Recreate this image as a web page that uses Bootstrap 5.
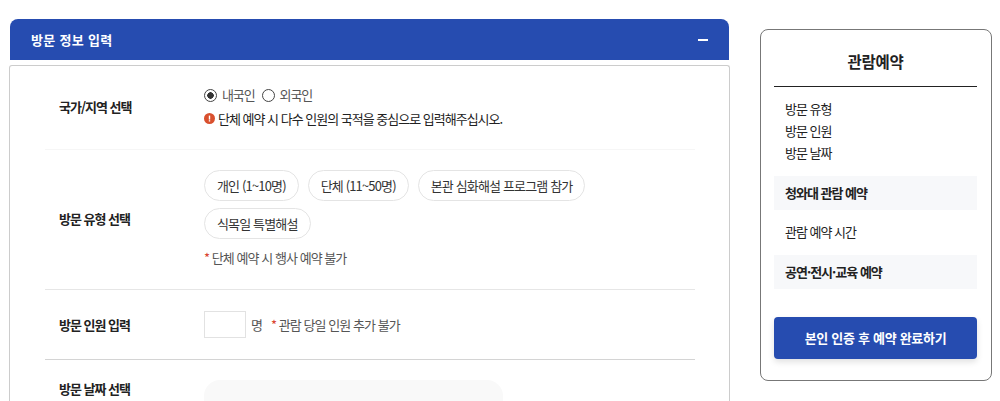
<!DOCTYPE html>
<html lang="ko">
<head>
<meta charset="utf-8">
<title>방문 정보 입력</title>
<link href="https://cdn.jsdelivr.net/npm/bootstrap@5.3.0/dist/css/bootstrap.min.css" rel="stylesheet">
<style>
html,body{height:401px;overflow:hidden;background:#fff}
body{font-family:"Noto Sans CJK KR","Noto Sans",sans-serif;font-size:13px;color:#222;letter-spacing:-1px}
.stage{display:flex;align-items:flex-start;padding:19px 8px 0 10px;height:401px;overflow:hidden}
.main-col{width:719px;flex:none}
.side-col{width:232px;flex:none;margin:10px 0 0 31px;height:352px;border:1px solid #777;border-radius:8px;padding:0 14px 0 13px;background:#fff}
.acc-head{height:41px;background:#264cb0;color:#fff;border-radius:8px 8px 0 0;padding:0 21px;font-weight:700;font-size:13px;letter-spacing:.3px}
.acc-minus{width:10px;height:2px;background:#fff}
.acc-body{margin:5px 0 0 -1px;width:721px;border:1px solid #ccc;border-bottom:0;border-radius:3px 3px 0 0;padding:0 34px 0 35px;height:340px}
.frow{display:flex;align-items:center;border-bottom:1px solid #ddd}
.frow-a{height:84px;border-color:#f6f6f6}
.frow-b{height:140px;border-color:#e6e6e6}
.frow-c{height:70px;border-color:#d4d4d4}
.flabel{width:159px;flex:none;padding-left:14px;font-weight:700;color:#222;letter-spacing:-1px}
.frow-a .flabel,.frow-b .flabel{padding-bottom:2px}
.radio-dot{width:13px;height:13px;border:1px solid #444;border-radius:50%;display:inline-block;flex:none}
.radio-dot.on{background:radial-gradient(circle,#333 0 3px,#fff 3.5px)}
.radio-txt{color:#555;margin:0 7px 0 5px;line-height:18px;letter-spacing:-1.1px;position:relative;top:-1px}
.warn-ico{width:11px;height:11px;flex:none;margin-right:3px}
.pill{border:1px solid #e4e4e4;border-radius:16px;height:31px;padding:0 12px;display:inline-flex;align-items:center;color:#333;background:#fff;white-space:nowrap;letter-spacing:-.85px}
.pill-wrap{gap:7px 9px;width:420px}
.note{color:#555;letter-spacing:-.95px}
.note-gap{margin-top:10px}
.note-t{position:relative;top:-1px}
.unit-txt{margin-left:5px}
.limit-txt{margin-left:9px}
.star{color:#d9432f}
.num-box{width:42px;height:27px;border:1px solid #e2e2e2;flex:none;display:block;border-radius:0;padding:0}
.date-box{width:299px;height:60px;background:#f9f9f9;border-radius:16px 16px 0 0;margin-top:20px}
.frow-d{align-items:flex-start;border:0}
.frow-d .flabel{padding-top:19px}
.side-title{height:57px;border-bottom:1px solid #222;font-size:15.5px;font-weight:700;text-align:center;line-height:62px;color:#222;letter-spacing:-.3px}
.side-list{padding:11px 11px 12px;margin:0;list-style:none}
.side-list li{line-height:22px}
.side-band{height:34px;background:#f7f8fa;padding:0 11px;font-weight:700;display:flex;align-items:center}
.side-plain{height:45px;padding:0 11px 2px;display:flex;align-items:center}
.side-btn{display:flex;align-items:center;justify-content:center;width:100%;height:42px;margin-top:28px;background:#264cb0;color:#fff;border:0;border-radius:4px;font-weight:700;font-size:13px;letter-spacing:-.3px;box-shadow:0 3px 6px rgba(0,0,0,.12)}
.side-btn:hover{background:#264cb0;color:#fff}
</style>
</head>
<body>
<div class="stage">
  <div class="main-col">
    <div class="acc-head d-flex align-items-center justify-content-between">
      <span>방문 정보 입력</span><span class="acc-minus"></span>
    </div>
    <div class="acc-body">
      <div class="frow frow-a">
        <div class="flabel">국가/지역 선택</div>
        <div>
          <div class="d-flex align-items-center">
            <span class="radio-dot on"></span><span class="radio-txt">내국인</span>
            <span class="radio-dot"></span><span class="radio-txt">외국인</span>
          </div>
          <div class="d-flex align-items-center mt-1">
            <svg class="warn-ico" viewBox="0 0 11 11"><circle cx="5.5" cy="5.5" r="5.5" fill="#d9502e"/><rect x="4.8" y="2.6" width="1.4" height="4" fill="#fff"/><rect x="4.8" y="7.2" width="1.4" height="1.3" fill="#fff"/></svg>
            <span>단체 예약 시 다수 인원의 국적을 중심으로 입력해주십시오.</span>
          </div>
        </div>
      </div>
      <div class="frow frow-b">
        <div class="flabel">방문 유형 선택</div>
        <div>
          <div class="d-flex flex-wrap pill-wrap">
            <span class="pill">개인 (1~10명)</span>
            <span class="pill">단체 (11~50명)</span>
            <span class="pill">본관 심화해설 프로그램 참가</span>
            <span class="pill">식목일 특별해설</span>
          </div>
          <div class="note note-gap note-t"><span class="star">*</span> 단체 예약 시 행사 예약 불가</div>
        </div>
      </div>
      <div class="frow frow-c">
        <div class="flabel">방문 인원 입력</div>
        <div class="d-flex align-items-center">
          <input class="num-box" type="text" aria-label="방문 인원">
          <span class="note unit-txt">명</span>
          <span class="note limit-txt"><span class="star">*</span> 관람 당일 인원 추가 불가</span>
        </div>
      </div>
      <div class="frow frow-d">
        <div class="flabel">방문 날짜 선택</div>
        <div class="date-box"></div>
      </div>
    </div>
  </div>
  <aside class="side-col">
    <div class="side-title">관람예약</div>
    <ul class="side-list">
      <li>방문 유형</li><li>방문 인원</li><li>방문 날짜</li>
    </ul>
    <div class="side-band">청와대 관람 예약</div>
    <div class="side-plain">관람 예약 시간</div>
    <div class="side-band">공연·전시·교육 예약</div>
    <a href="#" class="btn side-btn">본인 인증 후 예약 완료하기</a>
  </aside>
</div>
<script src="https://cdn.jsdelivr.net/npm/bootstrap@5.3.0/dist/js/bootstrap.bundle.min.js"></script>
</body>
</html>
